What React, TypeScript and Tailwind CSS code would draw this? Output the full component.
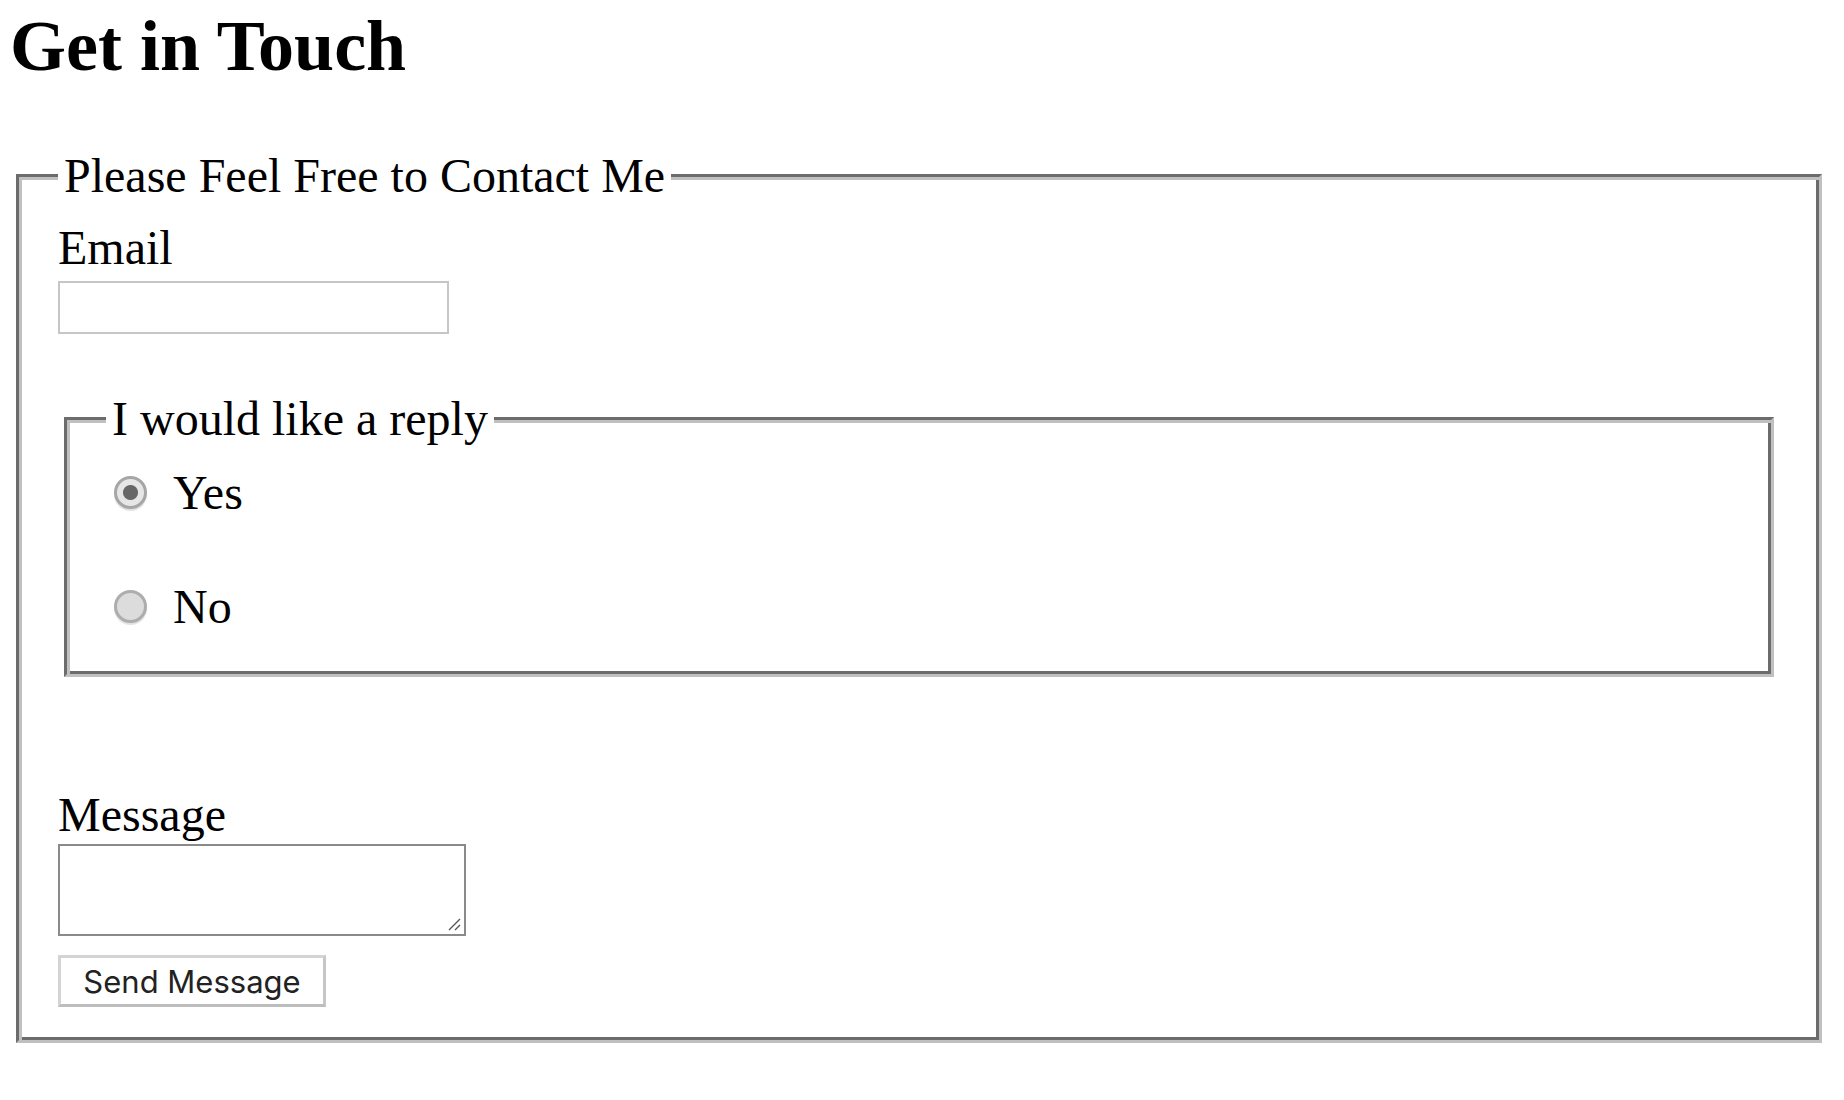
function Radio({ label, checked = false, className = '' }: { label: string; checked?: boolean; className?: string }) {
  return (
    <label className={`flex items-center h-[55px] ${className}`}>
      <input
        type="radio"
        name="reply"
        defaultChecked={checked}
        className="appearance-none ml-[8px] w-[33px] h-[33px] rounded-full border-[3px] border-[#adadad] bg-[#dcdcdc] shadow-[0_2px_1px_#e2e2e2] checked:border-[#a6a6a6] checked:bg-[radial-gradient(circle,#676767_0_7px,#e6e6e6_8px)]"
      />
      <span className="ml-[26px]">{label}</span>
    </label>
  );
}

// groove look: dark/light outer half from the border, inner half from an inset shadow
const groove =
  'border-[3px] border-t-[#6c6c6c] border-l-[#6c6c6c] border-b-[#c0c0c0] border-r-[#c0c0c0] shadow-[inset_3px_3px_0_#c0c0c0,inset_-3px_-3px_0_#6c6c6c]';

export default function App() {
  return (
    <div className="min-h-[1100px] bg-white pl-[10px] pr-[16px] pt-[5px] font-['Liberation_Serif',serif] text-[48px] leading-[normal] text-black">
      <h1 className="text-[72px] font-bold leading-[normal]">Get in Touch</h1>

      <form className="mt-[60px]">
        <fieldset className={`mx-[6px] px-[39px] pt-[17px] pb-[33px] ${groove}`}>
          <legend className="px-[6px] bg-white">Please Feel Free to Contact Me</legend>

          <label className="block">Email</label>
          <input
            type="email"
            className="block mt-[6px] w-[391px] h-[53px] border-2 border-[#c6c6c6] bg-white outline-none"
          />

          <fieldset className={`mt-[57px] mx-[6px] px-[39px] pt-[19px] pb-[40px] ${groove}`}>
            <legend className="px-[6px] bg-white">I would like a reply</legend>
            <Radio label="Yes" checked />
            <Radio label="No" className="mt-[59px]" />
          </fieldset>

          <label className="block mt-[110px]">Message</label>
          <div className="relative mt-[2px] w-[408px] h-[92px]">
            <textarea className="block w-full h-full resize-none border-2 border-[#8a8a8a] bg-white outline-none" />
            <svg className="absolute right-[5px] bottom-[5px] w-[14px] h-[14px]" viewBox="0 0 14 14">
              <path d="M13 2 L2 13 M13 8 L8 13" stroke="#555" strokeWidth="1.4" fill="none" />
            </svg>
          </div>

          <button
            type="button"
            className="block mt-[19px] w-[268px] h-[52px] p-0 bg-white border-[3px] border-[#d4d4d4] border-b-[#bdbdbd] border-r-[#c6c6c6] font-['Inter',sans-serif] text-[31px] leading-none text-[#222]"
          >
            Send Message
          </button>
        </fieldset>
      </form>
    </div>
  );
}
